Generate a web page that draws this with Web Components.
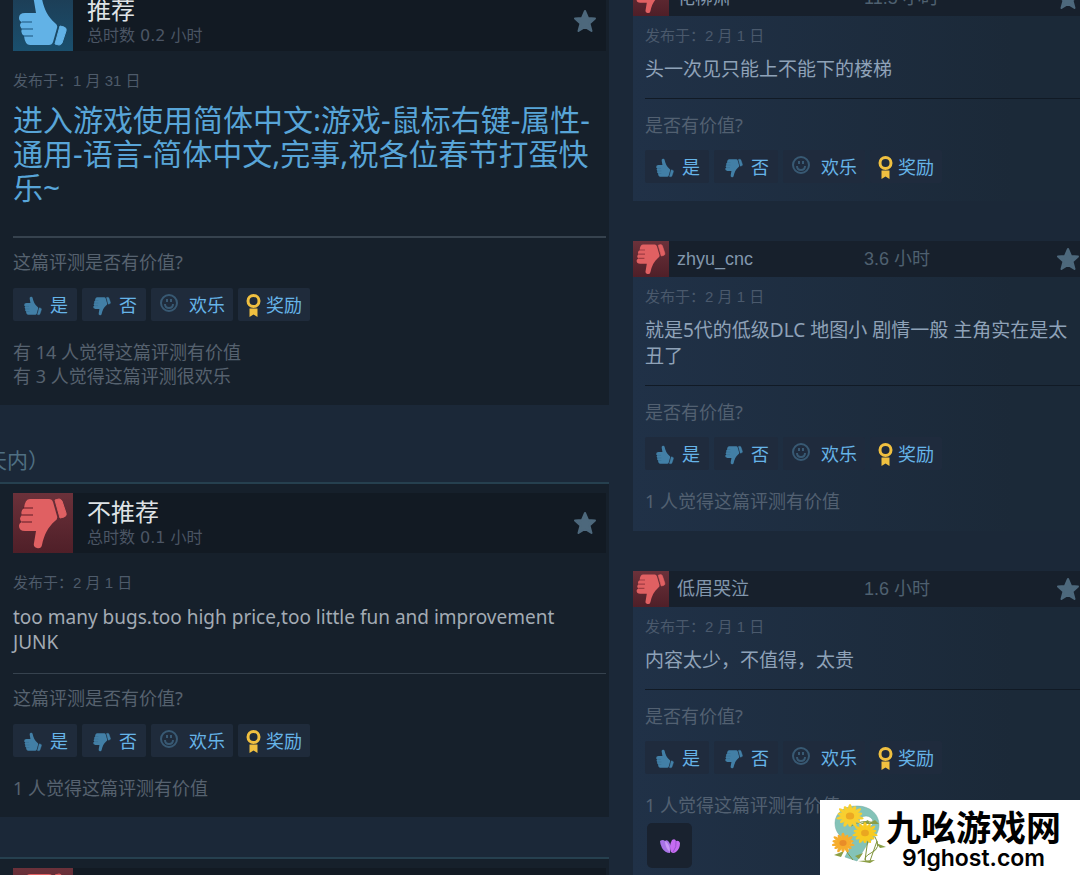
<!DOCTYPE html>
<html lang="zh-CN">
<head>
<meta charset="UTF-8">
<meta name="viewport" content="width=device-width, initial-scale=1">
<title>评测</title>
<style>
  :root {
    --ui-font: "Noto Sans", "Noto Sans CJK SC", sans-serif;
    --alt-font: "Liberation Sans", "Noto Sans CJK SC", sans-serif;
    --wide-font: "DejaVu Sans", "Noto Sans CJK SC", sans-serif;
  }
  body {
    margin: 0;
    background: #1b2838;
    font-family: var(--ui-font);
  }
</style>
</head>
<body>
<reviews-page>
  <review-card slot="main" vote="up">
    <a slot="title" href="#r1">推荐</a>
    <span slot="hours">总时数 0.2 小时</span>
    <span slot="date">发布于：1 月 31 日</span>
    <h1>进入游戏使用简体中文:游戏-鼠标右键-属性-通用-语言-简体中文,完事,祝各位春节打蛋快乐~</h1>
    <div slot="stats">有 14 人觉得这篇评测有价值</div>
    <div slot="stats">有 3 人觉得这篇评测很欢乐</div>
  </review-card>
  <section-title slot="main">天内）</section-title>
  <review-card slot="main" vote="down">
    <a slot="title" href="#r2">不推荐</a>
    <span slot="hours">总时数 0.1 小时</span>
    <span slot="date">发布于：2 月 1 日</span>
    too many bugs.too high price,too little fun and improvement<br>JUNK
    <div slot="stats">1 人觉得这篇评测有价值</div>
  </review-card>
  <review-card slot="main" vote="down" class="next"></review-card>

  <recent-card slot="side">
    <a slot="name" href="#u1">花柳肃</a>
    <span slot="hours">11.5 小时</span>
    <span slot="date">发布于：2 月 1 日</span>
    头一次见只能上不能下的楼梯
  </recent-card>
  <recent-card slot="side">
    <a slot="name" href="#u2">zhyu_cnc</a>
    <span slot="hours">3.6 小时</span>
    <span slot="date">发布于：2 月 1 日</span>
    就是5代的低级DLC 地图小 剧情一般 主角实在是太丑了
    <div slot="stats">1 人觉得这篇评测有价值</div>
  </recent-card>
  <recent-card slot="side">
    <a slot="name" href="#u3">低眉哭泣</a>
    <span slot="hours">1.6 小时</span>
    <span slot="date">发布于：2 月 1 日</span>
    内容太少，不值得，太贵
    <div slot="stats">1 人觉得这篇评测有价值</div>
    <award-badge slot="stats"></award-badge>
  </recent-card>
</reviews-page>
<site-mark></site-mark>

<script>
const HAND = `
  <path d="M17 6H36Q39 6 40 9L44 23Q45 26 42 28C35 34 31 42 29 52Q28 56 24 55Q20 54 21 50L23 38H12Q6 38 6 33Q6 30 9 29Q5 26 9 22Q7 18 11 15Q12 6 17 6Z"/>
  <path d="M42 7L46 6Q48 6 49 8L53 20Q54 23 51 24L47 25Z" stroke-width="1" stroke-linejoin="round" stroke="currentColor"/>`;
const FINGERS = '<path d="M10 15H20M9 22H20M9 29H19" fill="none" stroke="var(--crease, rgba(80, 20, 30, 0.45))" stroke-width="2"/>';

function handSvg(vote) {
  const flip = vote === 'up' ? 'transform="matrix(1 0 0 -1 0 60)"' : '';
  return `<svg viewBox="0 0 60 60" fill="currentColor" aria-hidden="true"><g ${flip}>${HAND}${FINGERS}</g></svg>`;
}

class VoteThumb extends HTMLElement {
  constructor() {
    super();
    this.attachShadow({ mode: 'open' });
  }
  connectedCallback() {
    this.shadowRoot.innerHTML = `
      <style>
        :host {
          display: block;
          flex: none;
          width: 60px;
          height: 60px;
          color: #e06062;
          background: linear-gradient(#6b313a, #4f1f28);
        }
        :host([vote="up"]) {
          color: #62b2e6;
          background: linear-gradient(#1d3c54, #1a4f6d);
          --crease: rgba(20, 70, 110, 0.45);
        }
        :host([small]) {
          width: 36px;
          height: 36px;
        }
        svg { display: block; width: 100%; height: 100%; }
      </style>
      ${handSvg(this.getAttribute('vote'))}
    `;
  }
}

class StarButton extends HTMLElement {
  constructor() {
    super();
    this.attachShadow({ mode: 'open' });
    this.shadowRoot.innerHTML = `
      <style>
        :host { display: block; flex: none; }
        button {
          display: block;
          padding: 0;
          border: none;
          background: none;
          color: #4d687c;
          cursor: pointer;
        }
        svg { display: block; width: 24px; height: 24px; }
      </style>
      <button aria-label="收藏">
        <svg viewBox="0 0 24 24" fill="currentColor" stroke="currentColor" stroke-width="2" stroke-linejoin="round"><path d="M12 2L15 9L22 9.500L16.500 14.500L18.500 22L12 18L5.500 22L7.500 14.500L2 9.500L9 9Z"/></svg>
      </button>
    `;
  }
}

class VoteBar extends HTMLElement {
  constructor() {
    super();
    this.attachShadow({ mode: 'open' });
    this.shadowRoot.innerHTML = `
      <style>
        :host {
          display: flex;
          gap: 5px;
          --crease: rgba(20, 40, 60, 0.15);
        }
        button {
          display: flex;
          align-items: center;
          gap: 6px;
          height: 33px;
          padding: 0 9px;
          border: none;
          border-radius: 2px;
          background: var(--vote-bg, #1f2b3b);
          color: #66b4e8;
          font-family: var(--ui-font);
          font-size: 18px;
          line-height: 24px;
          cursor: pointer;
        }
        svg { display: block; width: 22px; height: 24px; padding-top: 2px; color: #427fa6; }
        .smile { gap: 10px; padding: 0 8px; }
        .smile svg { width: 20px; height: 20px; padding: 0 0 4px; color: #385973; }
        .award { gap: 5px; padding: 0 8px; }
        .award svg { width: 15px; height: 24px; padding: 0; color: #f0c040; }
      </style>
      <button>${handSvg('up')}是</button>
      <button>${handSvg('down')}否</button>
      <button class="smile">
        <svg viewBox="0 0 20 20" fill="none" stroke="currentColor" stroke-width="2" aria-hidden="true">
          <circle cx="10" cy="10" r="8"/>
          <path d="M6 11Q6 15 10 15Q14 15 14 11M8 6V9M12 6V9"/>
        </svg>欢乐</button>
      <button class="award">
        <svg viewBox="0 0 15 24" aria-hidden="true">
          <circle cx="7.5" cy="8" r="5.500" fill="none" stroke="currentColor" stroke-width="3"/>
          <path d="M3.500 15.500H11.500V24L7.500 21.500L3.500 24Z" fill="currentColor"/>
        </svg>奖励</button>
    `;
  }
}

class ReviewCard extends HTMLElement {
  constructor() {
    super();
    this.attachShadow({ mode: 'open' });
  }
  connectedCallback() {
    this.shadowRoot.innerHTML = `
      <style>
        :host {
          display: block;
          border-top: 2px solid #26404f;
          background: #16202b;
          padding: 9px 3px 17px 13px;
        }
        :host(.next) { margin-top: 40px; }
        header {
          display: flex;
          align-items: center;
          gap: 14px;
          padding-right: 9px;
          background: #121a23;
        }
        .heading {
          flex: 1;
          display: flex;
          flex-direction: column;
          gap: 2px;
        }
        slot[name="title"] { display: block; font-size: 24px; line-height: 28px; }
        slot[name="hours"] {
          display: block;
          color: #4b5564;
          font-family: var(--wide-font);
          font-size: 16px;
          line-height: 20px;
        }
        ::slotted(a) { color: #dfe3e6; text-decoration: none; }
        .date {
          margin-top: 18px;
          color: #4e5b6a;
          font-family: var(--alt-font);
          font-size: 15px;
          line-height: 24px;
        }
        .text {
          margin-top: 10px;
          color: #a3abb4;
          font-size: 19px;
          line-height: 25px;
        }
        ::slotted(h1) {
          margin: 0 0 31px;
          color: #58a5d8;
          font-size: 30px;
          font-weight: 400;
          line-height: 34px;
        }
        hr {
          margin: 18px 0 12px;
          border: none;
          border-top: 1px solid #36424e;
        }
        :host([vote="up"]) hr { border-top-width: 2px; }
        .question, .stats {
          color: #56626f;
          font-size: 18px;
          line-height: 24px;
        }
        .stats { margin-top: 19px; }
        vote-bar { margin-top: 14px; }
      </style>
      <header>
        <vote-thumb vote="${this.getAttribute('vote')}"></vote-thumb>
        <div class="heading"><slot name="title"></slot><slot name="hours"></slot></div>
        <star-button></star-button>
      </header>
      <div class="date"><slot name="date"></slot></div>
      <div class="text"><slot></slot></div>
      <hr>
      <div class="question">这篇评测是否有价值?</div>
      <vote-bar></vote-bar>
      <div class="stats"><slot name="stats"></slot></div>
    `;
  }
}

class RecentCard extends HTMLElement {
  constructor() {
    super();
    this.attachShadow({ mode: 'open' });
    this.shadowRoot.innerHTML = `
      <style>
        :host {
          display: block;
          margin-bottom: 40px;
          padding-bottom: 18px;
          background: linear-gradient(to right, #203147, #1b2938 85%);
          --vote-bg: #1f2b3d;
        }
        header {
          display: grid;
          grid-template-columns: 36px 179px 1fr 24px;
          gap: 8px;
          align-items: center;
          background: #17202c;
          color: #4f6070;
          font-family: var(--alt-font);
          font-size: 18px;
          line-height: 24px;
        }
        ::slotted(a) { color: #8297ad; text-decoration: none; }
        .content { padding: 10px 0 0 12px; }
        .date {
          color: #4a596c;
          font-family: var(--alt-font);
          font-size: 15px;
          line-height: 20px;
        }
        .text {
          margin-top: 10px;
          color: #8fa2b8;
          font-size: 19px;
          line-height: 26px;
        }
        hr {
          margin: 16px 0 14px;
          border: none;
          border-top: 1px solid #111a25;
        }
        .question, slot[name="stats"] {
          display: block;
          color: #526071;
          font-size: 18px;
          line-height: 24px;
        }
        vote-bar { margin-top: 13px; }
        ::slotted(div) { margin-top: 19px; }
      </style>
      <header>
        <vote-thumb vote="down" small></vote-thumb>
        <slot name="name"></slot>
        <slot name="hours"></slot>
        <star-button></star-button>
      </header>
      <div class="content">
        <div class="date"><slot name="date"></slot></div>
        <div class="text"><slot></slot></div>
        <hr>
        <div class="question">是否有价值?</div>
        <vote-bar></vote-bar>
        <slot name="stats"></slot>
      </div>
    `;
  }
}

class AwardBadge extends HTMLElement {
  constructor() {
    super();
    this.attachShadow({ mode: 'open' });
    this.shadowRoot.innerHTML = `
      <style>
        :host {
          display: flex;
          align-items: center;
          justify-content: center;
          width: 45px;
          height: 45px;
          margin: 6px 0 0 2px;
          border-radius: 5px;
          background: #19222f;
        }
        svg { width: 20px; height: 16px; }
      </style>
      <svg viewBox="0 0 20 16" aria-hidden="true">
        <path d="M0 3Q3 1 5 3Q7 1 9 4L11 8L10 15Q5 15 2 10Q0 6 0 3Z" fill="#a873e6"/>
        <path d="M5 3Q10 6 10 14Q5 10 5 3Z" fill="#c99af5"/>
        <path d="M12 2Q15 0 16 3Q19 2 20 5Q20 11 16 14Q13 16 11 14Q9 7 12 2Z" fill="#c56cf0"/>
        <path d="M16 3Q17 9 13 14" fill="none" stroke="#9a52d0"/>
      </svg>
    `;
  }
}

class SectionTitle extends HTMLElement {
  constructor() {
    super();
    this.attachShadow({ mode: 'open' });
    this.shadowRoot.innerHTML = `
      <style>
        :host {
          display: block;
          padding: 40px 0 7px;
          color: #4f6f82;
          font-size: 21px;
          line-height: 30px;
          text-indent: -14px;
        }
      </style>
      <slot></slot>
    `;
  }
}

class ReviewsPage extends HTMLElement {
  constructor() {
    super();
    this.attachShadow({ mode: 'open' });
    this.shadowRoot.innerHTML = `
      <style>
        :host {
          display: grid;
          grid-template-columns: 609fr 447fr;
          gap: 24px;
          height: 100vh;
          overflow: hidden;
        }
        main, aside { margin-top: -20px; min-width: 0; }
      </style>
      <main><slot name="main"></slot></main>
      <aside><slot name="side"></slot></aside>
    `;
  }
}

function flower(x, y, r, petal, heart) {
  let petals = '';
  for (let i = 0; i < 14; i++) {
    const length = i % 2 ? 0.4 : 0.5;
    petals += `<ellipse cx="${x}" cy="${y - r * 0.5}" rx="${r * 0.15}" ry="${r * length}" transform="rotate(${i * 360 / 14} ${x} ${y})"/>`;
  }
  return `<g transform="matrix(1 0 0 0.85 0 ${y * 0.15})"><g fill="${petal}">${petals}</g><circle cx="${x}" cy="${y}" r="${r * 0.3}" fill="${heart}"/></g>`;
}

class SiteMark extends HTMLElement {
  constructor() {
    super();
    this.attachShadow({ mode: 'open' });
    this.shadowRoot.innerHTML = `
      <style>
        :host {
          position: fixed;
          right: 0;
          bottom: 0;
          box-sizing: border-box;
          display: flex;
          width: 260px;
          height: 75px;
          padding: 4px 17px 0 12px;
          background: #fff;
          color: #000;
        }
        svg { flex: none; width: 54px; height: 62px; }
        .name {
          display: flex;
          flex-direction: column;
          align-items: center;
          white-space: nowrap;
        }
        strong {
          font-family: "Noto Sans CJK SC", sans-serif;
          font-size: 35px;
          font-weight: 700;
          line-height: 44px;
        }
        span {
          font-family: Inter, sans-serif;
          font-size: 23px;
          font-weight: 600;
          line-height: 20px;
        }
      </style>
      <svg viewBox="0 0 54 62" aria-hidden="true">
        <path fill-rule="evenodd" d="M25 2C38 2 47 10 47 21C47 28 43 34 36 39L25 57L13 53L21 37C8 35 3 28 3 19C3 9 12 2 25 2ZM34 12A7 6 0 1 0 34 24A7 6 0 1 0 34 12Z" fill="#84c3b8" stroke="#6fa8a0" stroke-width="0.5"/>
        <path d="M19 22Q30 15 43 19M43 33Q50 44 39 49Q31 53 34 57M36 35L33 56M45 37L38 57M12 41Q15 50 21 56" fill="none" stroke="#7f933c"/>
        <path d="M28 20L36 16L38 20ZM35 20L43 16L47 20ZM44 39L54 43L48 44ZM2 51L12 47L9 53ZM23 52L31 49L27 55ZM26 57L43 56L38 59Z" fill="#8b9e45"/>
        ${flower(18, 12, 14, '#f8cf30', '#eca822')}
        ${flower(33, 29, 13, '#f8cb22', '#eaa620')}
        ${flower(11, 39, 12, '#f6ad2d', '#e98c28')}
      </svg>
      <div class="name"><strong>九吆游戏网</strong><span>91ghost.com</span></div>
    `;
  }
}

customElements.define('vote-thumb', VoteThumb);
customElements.define('star-button', StarButton);
customElements.define('vote-bar', VoteBar);
customElements.define('review-card', ReviewCard);
customElements.define('recent-card', RecentCard);
customElements.define('award-badge', AwardBadge);
customElements.define('section-title', SectionTitle);
customElements.define('reviews-page', ReviewsPage);
customElements.define('site-mark', SiteMark);
</script>
</body>
</html>
